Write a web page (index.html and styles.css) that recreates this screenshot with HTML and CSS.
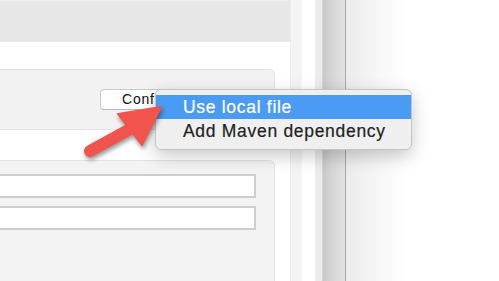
FILE: index.html
```html
<!DOCTYPE html>
<html>
<head>
<meta charset="utf-8">
<link rel="stylesheet" href="styles.css">
</head>
<body>
<div class="app">
  <div class="main">
    <div class="topbar"></div>
    <div class="spacer"></div>
    <div class="panel panel-top">
      <button class="btn">Configure</button>
    </div>
    <div class="panel panel-bottom">
      <div class="input"></div>
      <div class="input"></div>
    </div>
  </div>
  <div class="strip strip-a"></div>
  <div class="strip strip-b"></div>
  <div class="strip strip-c"></div>
  <div class="scroll"></div>
  <div class="rest"></div>
</div>

<div class="menu">
  <div class="item active">Use local file</div>
  <div class="item">Add Maven dependency</div>
</div>

<svg class="arrow" width="499" height="281" viewBox="0 0 499 281">
  <g fill="#f0544c" stroke="#f0544c">
    <line x1="90" y1="151" x2="132" y2="128" stroke-width="12" stroke-linecap="round"/>
    <polygon points="118,114 161,107 142,145" stroke-width="2" stroke-linejoin="round"/>
  </g>
</svg>
</body>
</html>
```

FILE: styles.css
```css
html, body {
  margin: 0;
  padding: 0;
}
body {
  width: 499px;
  height: 281px;
  overflow: hidden;
  background: #ffffff;
  font-family: "Liberation Sans", Arial, sans-serif;
  position: relative;
}
.app {
  display: flex;
  height: 281px;
}
.main {
  width: 290px;
  display: flex;
  flex-direction: column;
  background: #ffffff;
}
.topbar {
  height: 41px;
  border-top: 1px solid #ededed;
  background: #e7e7e7;
}
.spacer {
  height: 27px;
}
.panel {
  margin-right: 15px;
  margin-left: -10px;
  background: #f2f2f2;
  border: 1px solid #e3e3e3;
  border-left: none;
}
.panel-top {
  height: 40px;
  border-radius: 0 6px 6px 0;
  padding-top: 19px;
  padding-left: 110px;
}
.btn {
  display: block;
  width: 120px;
  height: 21px;
  margin: 0;
  padding: 0 0 0 21px;
  text-align: left;
  background: #ffffff;
  border: 1px solid #c9c9c9;
  border-bottom-color: #b9b9b9;
  border-radius: 4px;
  font-family: "Liberation Sans", Arial, sans-serif;
  font-size: 14px;
  letter-spacing: 0.8px;
  color: #111111;
  line-height: 19px;
}
.panel-bottom {
  margin-top: 30px;
  flex: 1;
  border-bottom: none;
  border-radius: 0 6px 0 0;
  background: #f3f3f3;
  padding-top: 13px;
  display: flex;
  flex-direction: column;
  gap: 8px;
}
.input {
  width: 264px;
  height: 20px;
  background: #ffffff;
  border: 2px solid #cdcdcd;
  border-left: none;
}
.strip-a {
  width: 12px;
  background: #f4f4f4;
  border-left: 1px solid #ececec;
  box-sizing: border-box;
}
.strip-b {
  width: 13px;
  background: #ffffff;
}
.strip-c {
  width: 7px;
  background: #ececec;
}
.scroll {
  width: 24px;
  box-sizing: border-box;
  border-left: 1px solid #d4d4d4;
  border-right: 1px solid #a8a8a8;
  background: linear-gradient(to right, #c8c8c8, #d6d6d6 40%, #e2e2e2);
}
.rest {
  flex: 1;
  background: linear-gradient(to right, #ebebeb, #f6f6f6 30px, #ffffff 60px);
}
.menu {
  position: absolute;
  left: 155px;
  top: 89px;
  width: 257px;
  box-sizing: border-box;
  padding: 5px 0 6px;
  background: #efefef;
  border: 1px solid #c4c4c4;
  border-radius: 6px;
  box-shadow: 0 6px 18px rgba(0, 0, 0, 0.22);
}
.item {
  height: 24px;
  line-height: 24px;
  padding-left: 27px;
  font-size: 17.5px;
  letter-spacing: 0.7px;
  color: #222222;
  -webkit-text-stroke: 0.2px currentColor;
}
.item.active {
  background: #4a9bf4;
  color: #ffffff;
}
.arrow {
  position: absolute;
  left: 0;
  top: 0;
  filter: drop-shadow(1px 3px 2px rgba(0, 0, 0, 0.4));
}
```
